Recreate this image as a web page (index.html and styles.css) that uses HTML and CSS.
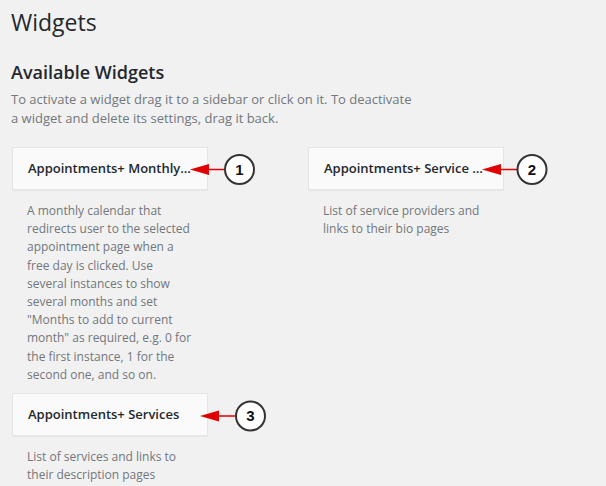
FILE: index.html
```html
<!DOCTYPE html>
<html lang="en">
<head>
    <meta charset="UTF-8">
    <title>Widgets</title>
    <link rel="stylesheet" href="styles.css">
</head>
<body>
    <div class="wrap">
        <h1>Widgets</h1>
        <h2>Available Widgets</h2>
        <p class="intro">To activate a widget drag it to a sidebar or click on it. To deactivate a widget and delete its settings, drag it back.</p>

        <div class="widget-list">
            <div class="widget">
                <div class="widget-title">Appointments+ Monthly Calendar</div>
                <div class="widget-desc">A monthly calendar that redirects user to the selected appointment page when a free day is clicked. Use several instances to show several months and set "Months to add to current month" as required, e.g. 0 for the first instance, 1 for the second one, and so on.</div>
            </div>
            <div class="widget">
                <div class="widget-title">Appointments+ Service Providers</div>
                <div class="widget-desc">List of service providers and links to their bio pages</div>
            </div>
            <div class="widget">
                <div class="widget-title">Appointments+ Services</div>
                <div class="widget-desc">List of services and links to their description pages</div>
            </div>
        </div>
    </div>

    <!-- callouts drawn over the screenshot -->
    <svg class="callouts" width="606" height="486" viewBox="0 0 606 486">
        <g class="callout">
            <polygon points="190,169.5 209,164 209,175"/>
            <line x1="208" y1="169.5" x2="225" y2="169.5"/>
            <circle cx="239.5" cy="169.5" r="14.5"/>
            <text x="239.5" y="174.5">1</text>
        </g>
        <g class="callout">
            <polygon points="482,169.5 501,164 501,175"/>
            <line x1="500" y1="169.5" x2="517" y2="169.5"/>
            <circle cx="532" cy="169.5" r="14.5"/>
            <text x="532" y="174.5">2</text>
        </g>
        <g class="callout">
            <polygon points="200,416 219,410.5 219,421.5"/>
            <line x1="218" y1="416" x2="236" y2="416"/>
            <circle cx="250.5" cy="416" r="14.5"/>
            <text x="250.5" y="421">3</text>
        </g>
    </svg>
</body>
</html>
```

FILE: styles.css
```css
body {
    margin: 0;
    background-color: #f1f1f1;
    font-family: "Open Sans", sans-serif;
    color: #23282d;
}

.wrap {
    padding: 0 11px;
}

h1 {
    font-size: 23px;
    font-weight: 400;
    line-height: 29px;
    margin: 0;
    padding: 8px 0 0;
}

h2 {
    font-size: 18px;
    font-weight: 600;
    line-height: 24px;
    margin: 23px 0 0;
}

.intro {
    font-size: 13px;
    line-height: 19px;
    color: #72777c;
    width: 410px;
    margin: 6px 0 0;
}

/* liste des widgets */
.widget-list {
    display: grid;
    grid-template-columns: 296px 296px;
    margin: 19px 0 0 1px;
}

.widget {
    width: 196px;
}

.widget-title {
    background-color: #fafafa;
    border: 1px solid #e5e5e5;
    box-shadow: 0 1px 1px rgba(0, 0, 0, 0.04);
    padding: 0 15px;
    line-height: 41px;
    font-size: 13px;
    font-weight: 600;
    white-space: nowrap;
    overflow: hidden;
    text-overflow: ellipsis;
}

.widget-desc {
    font-size: 12px;
    line-height: 18.2px;
    color: #72777c;
    padding: 12px 15px 9px;
}

.callouts {
    position: absolute;
    top: 0;
    left: 0;
    pointer-events: none;
}

.callout polygon {
    fill: #e00000;
}

.callout line {
    stroke: #e00000;
    stroke-width: 1.5;
}

.callout circle {
    fill: #ffffff;
    stroke: #333333;
    stroke-width: 2;
}

.callout text {
    font-family: "Liberation Sans", Arial, sans-serif;
    font-size: 15px;
    font-weight: 700;
    fill: #111111;
    text-anchor: middle;
}
```
